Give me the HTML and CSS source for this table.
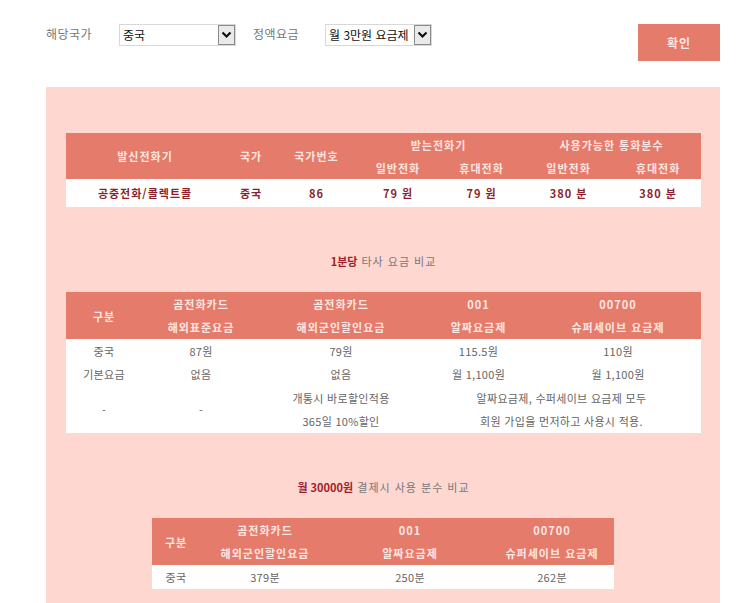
FILE: index.html
```html
<!DOCTYPE html>
<html lang="ko">
<head>
<meta charset="utf-8">
<link rel="stylesheet" href="styles.css">
</head>
<body>
<div class="topbar">
  <span class="lbl">해당국가</span>
  <div class="sel sel1"><span class="sel-text">중국</span><span class="sel-arrow"><svg width="11" height="8" viewBox="0 0 11 8"><path d="M1.5 1.5 L5.5 5.5 L9.5 1.5" fill="none" stroke="#111" stroke-width="2.2"/></svg></span></div>
  <span class="lbl lbl2">정액요금</span>
  <div class="sel sel2"><span class="sel-text">월 3만원 요금제</span><span class="sel-arrow"><svg width="11" height="8" viewBox="0 0 11 8"><path d="M1.5 1.5 L5.5 5.5 L9.5 1.5" fill="none" stroke="#111" stroke-width="2.2"/></svg></span></div>
  <button class="btn">확인</button>
</div>

<div class="panel">
  <table class="tbl t1">
    <colgroup><col class="c1a"><col class="c1b"><col class="c1c"><col class="c1d"><col class="c1e"><col class="c1f"><col class="c1g"></colgroup>
    <thead>
      <tr><th rowspan="2">발신전화기</th><th rowspan="2">국가</th><th rowspan="2">국가번호</th><th colspan="2">받는전화기</th><th colspan="2">사용가능한 통화분수</th></tr>
      <tr><th>일반전화</th><th>휴대전화</th><th>일반전화</th><th>휴대전화</th></tr>
    </thead>
    <tbody>
      <tr><td>공중전화/콜렉트콜</td><td>중국</td><td>86</td><td>79 원</td><td>79 원</td><td>380 분</td><td>380 분</td></tr>
    </tbody>
  </table>

  <p class="caption caption1"><b>1분당</b> 타사 요금 비교</p>

  <table class="tbl t2">
    <colgroup><col class="c2a"><col class="c2b"><col class="c2c"><col class="c2d"><col class="c2e"></colgroup>
    <thead>
      <tr><th rowspan="2">구분</th><th>곰전화카드</th><th>곰전화카드</th><th>001</th><th>00700</th></tr>
      <tr class="hr2"><th>해외표준요금</th><th>해외군인할인요금</th><th>알짜요금제</th><th>슈퍼세이브 요금제</th></tr>
    </thead>
    <tbody>
      <tr><td>중국</td><td>87원</td><td>79원</td><td>115.5원</td><td>110원</td></tr>
      <tr><td>기본요금</td><td>없음</td><td>없음</td><td>월 1,100원</td><td>월 1,100원</td></tr>
      <tr><td rowspan="2">-</td><td rowspan="2">-</td><td>개통시 바로할인적용</td><td colspan="2">알짜요금제, 수퍼세이브 요금제 모두</td></tr>
      <tr><td>365일 10%할인</td><td colspan="2">회원 가입을 먼저하고 사용시 적용.</td></tr>
    </tbody>
  </table>

  <p class="caption caption2"><b>월 30000원</b> 결제시 사용 분수 비교</p>

  <table class="tbl t3">
    <colgroup><col class="c3a"><col class="c3b"><col class="c3c"><col class="c3d"></colgroup>
    <thead>
      <tr><th rowspan="2">구분</th><th>곰전화카드</th><th>001</th><th>00700</th></tr>
      <tr class="hr2"><th>해외군인할인요금</th><th>알짜요금제</th><th>슈퍼세이브 요금제</th></tr>
    </thead>
    <tbody>
      <tr><td>중국</td><td>379분</td><td>250분</td><td>262분</td></tr>
    </tbody>
  </table>
</div>
</body>
</html>
```

FILE: styles.css
```css
html, body {
  margin: 0;
  padding: 0;
  background: #ffffff;
  font-family: "Noto Sans CJK KR", "Noto Sans", sans-serif;
}

.topbar {
  display: flex;
  align-items: flex-start;
  padding: 24px 20px 0 46px;
  height: 63px;
}

.lbl {
  width: 73px;
  font-size: 12px;
  color: #777;
  line-height: 20px;
  letter-spacing: 0.5px;
}

.lbl2 {
  width: 72px;
  margin-left: 17px;
}

.sel {
  display: flex;
  height: 20px;
  border: 1px solid #d8d8d8;
  background: #fff;
  box-sizing: content-box;
}

.sel1 { width: 115px; }
.sel2 { width: 105px; }

.sel-text {
  flex: 1;
  font-size: 12px;
  line-height: 20px;
  padding-left: 3px;
  color: #111;
  white-space: nowrap;
  overflow: hidden;
}

.sel-arrow {
  width: 15px;
  height: 18px;
  border: 1px solid #8a8a8a;
  background: #eaeaea;
  display: flex;
  align-items: center;
  justify-content: center;
}

.btn {
  margin-left: auto;
  width: 82px;
  height: 37px;
  border: none;
  background: #e57b6b;
  color: #fde8e3;
  font-family: "Noto Sans CJK KR", sans-serif;
  font-size: 12px;
  font-weight: bold;
  letter-spacing: 1px;
}

.panel {
  margin-left: 46px;
  width: 674px;
  background: #fed7d1;
  padding: 46px 19px 30px 20px;
  box-sizing: border-box;
  min-height: 530px;
}

.tbl {
  border-collapse: collapse;
  table-layout: fixed;
  background: #fff;
}

.tbl th {
  background: #e57b6b;
  color: #fde6e1;
  font-size: 11px;
  font-weight: bold;
  letter-spacing: 1px;
  padding: 0;
  height: 23px;
  text-align: center;
}

.tbl .hr2 th { height: 24px; }

.tbl td {
  text-align: center;
  font-size: 11px;
  color: #666;
  padding: 0;
  height: 23px;
}

.t1 { width: 635px; }
.t1 td {
  height: 28px;
  color: #8c1f2c;
  font-weight: bold;
  letter-spacing: 1px;
}
.c1a { width: 158px; }
.c1b { width: 54px; }
.c1c { width: 77px; }
.c1d { width: 86px; }
.c1e { width: 81px; }
.c1f { width: 93px; }
.c1g { width: 86px; }

.caption {
  margin: 0;
  text-align: center;
  font-size: 11px;
  color: #777;
  letter-spacing: 1px;
  line-height: 14px;
}
.caption b {
  color: #a01e2a;
  letter-spacing: 0;
}
.caption1 { padding: 47px 0 24px; }
.caption2 { padding: 47px 0 24px; }

.t2 { width: 635px; }
.t2 td { letter-spacing: 0.3px; height: 23.5px; }
.c2a { width: 76px; }
.c2b { width: 118px; }
.c2c { width: 162px; }
.c2d { width: 113px; }
.c2e { width: 166px; }

.t3 {
  width: 462px;
  margin-left: 86px;
}
.t3 td { height: 24px; letter-spacing: 0.3px; }
.c3a { width: 48px; }
.c3b { width: 130px; }
.c3c { width: 160px; }
.c3d { width: 124px; }
```
